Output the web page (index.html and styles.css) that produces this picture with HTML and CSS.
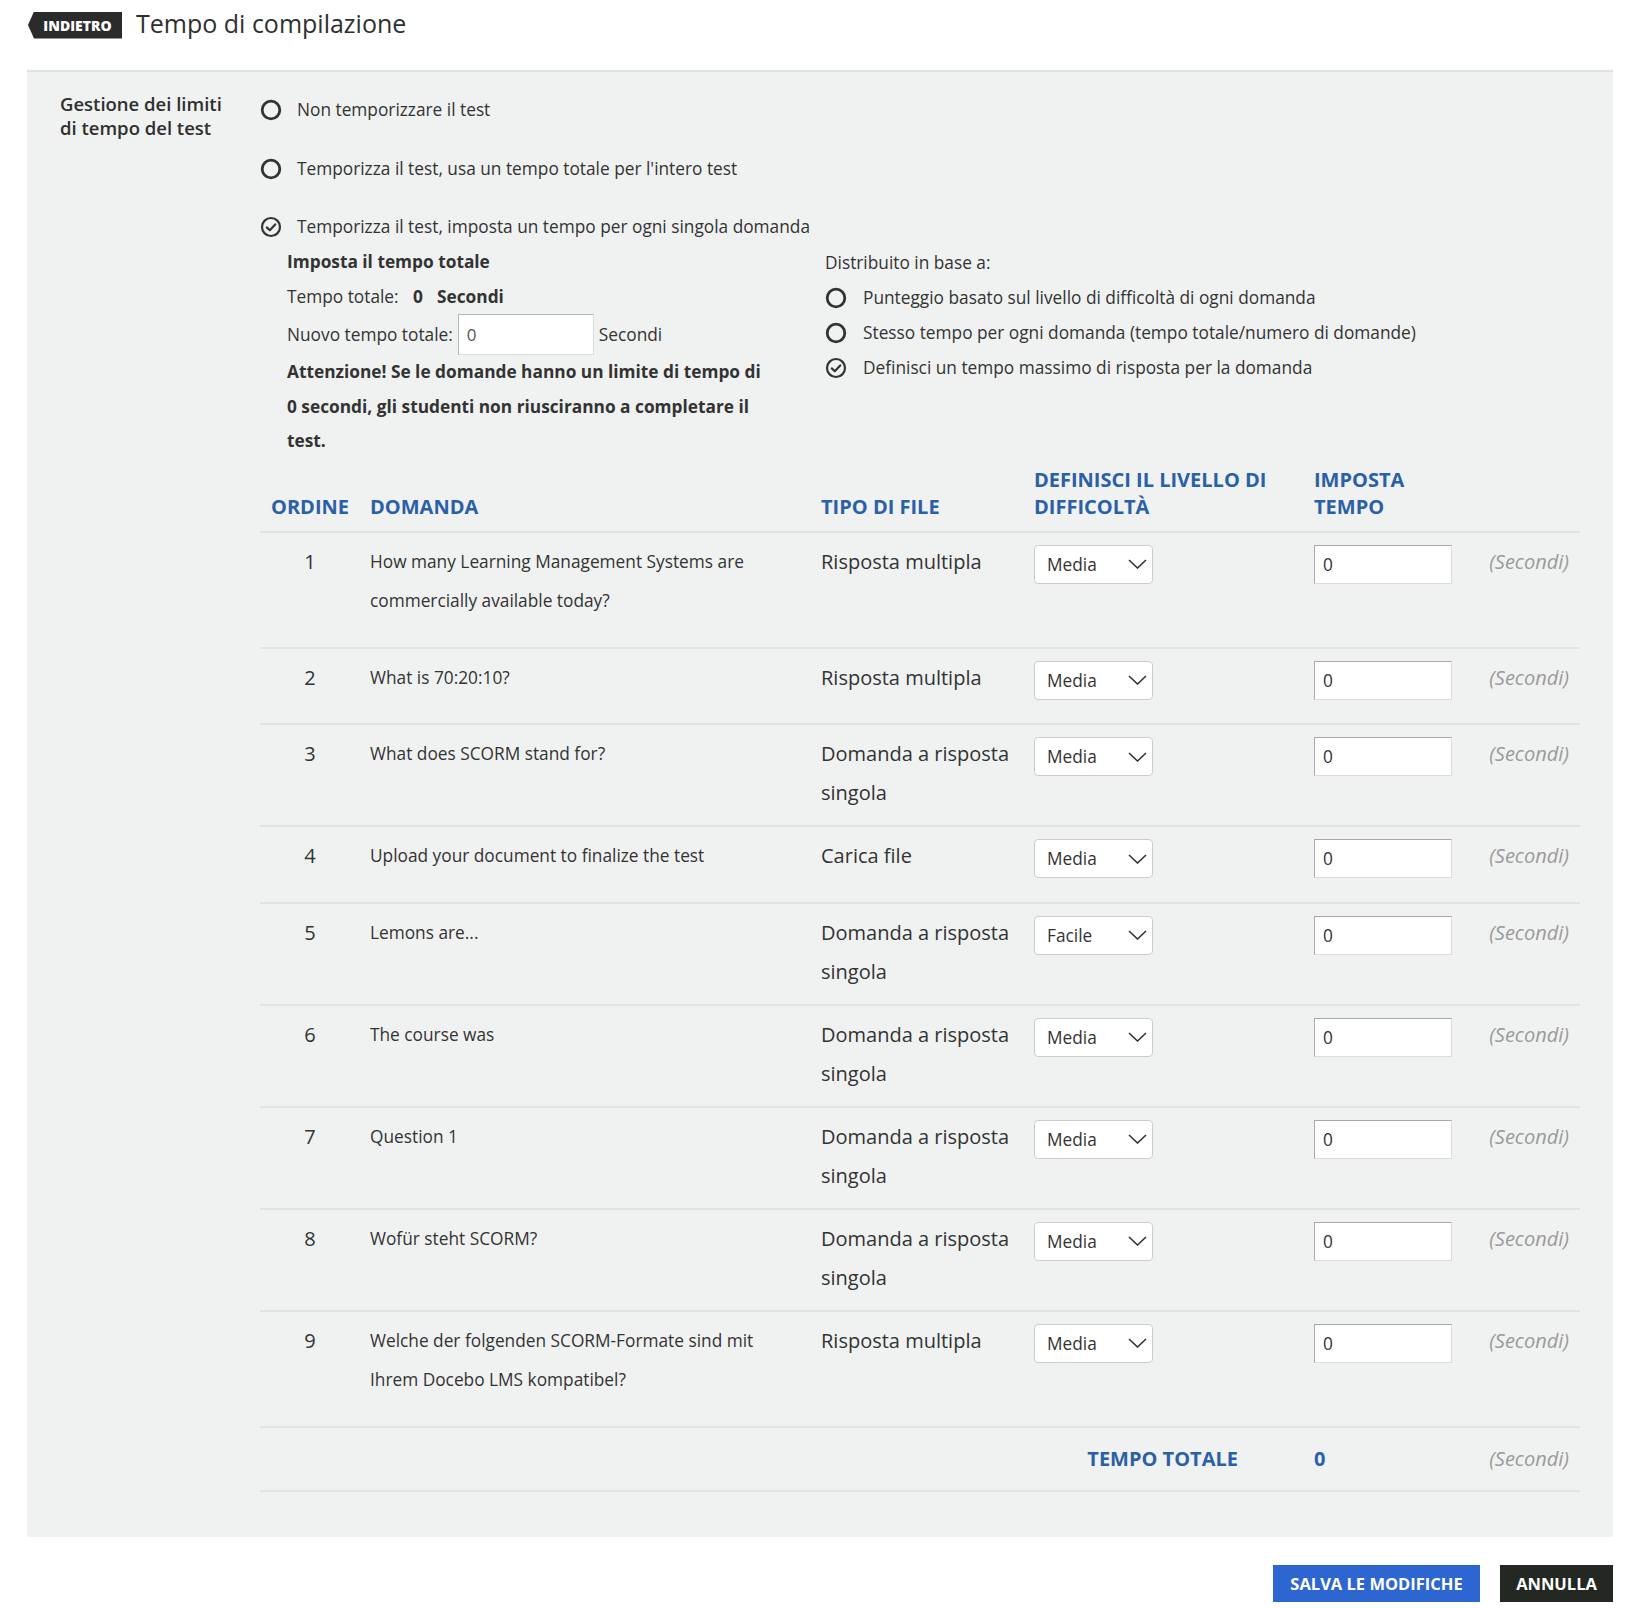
FILE: index.html
```html
<!DOCTYPE html>
<html lang="it">
<head>
<meta charset="utf-8">
<title>Tempo di compilazione</title>
<link rel="stylesheet" href="styles.css">
</head>
<body>
<header class="topbar">
  <a class="back-badge">INDIETRO</a>
  <h1 class="page-title">Tempo di compilazione</h1>
</header>

<section class="panel">
  <div class="panel-label">Gestione dei limiti di tempo del test</div>
  <div class="panel-body">
    <div class="radio-list">
      <div class="radio-row">
        <svg class="radio-icon" width="22" height="22" viewBox="0 0 22 22"><circle cx="11" cy="11" r="8.8" fill="none" stroke="#333" stroke-width="2.8"/></svg>
        <span>Non temporizzare il test</span>
      </div>
      <div class="radio-row">
        <svg class="radio-icon" width="22" height="22" viewBox="0 0 22 22"><circle cx="11" cy="11" r="8.8" fill="none" stroke="#333" stroke-width="2.8"/></svg>
        <span>Temporizza il test, usa un tempo totale per l'intero test</span>
      </div>
      <div class="radio-row">
        <svg class="radio-icon" width="22" height="22" viewBox="0 0 22 22"><circle cx="11" cy="11" r="9" fill="none" stroke="#333" stroke-width="2.2"/><path d="M6.8 11.4 L9.8 14.2 L15.2 8.4" fill="none" stroke="#333" stroke-width="2.2" stroke-linecap="round" stroke-linejoin="round"/></svg>
        <span>Temporizza il test, imposta un tempo per ogni singola domanda</span>
      </div>
    </div>

    <div class="sub-block">
      <div class="sub-left">
        <div class="sub-heading">Imposta il tempo totale</div>
        <div class="sub-line">Tempo totale: <b class="gap">0</b><b class="gap-wide">Secondi</b></div>
        <div class="sub-line input-line">Nuovo tempo totale: <input class="total-input" type="text" value="0"> Secondi</div>
        <p class="warning">Attenzione! Se le domande hanno un limite di tempo di 0 secondi, gli studenti non riusciranno a completare il test.</p>
      </div>
      <div class="sub-right">
        <div class="sub-line">Distribuito in base a:</div>
        <div class="dist-row">
          <svg class="radio-icon" width="22" height="22" viewBox="0 0 22 22"><circle cx="11" cy="11" r="8.8" fill="none" stroke="#333" stroke-width="2.8"/></svg>
          <span>Punteggio basato sul livello di difficoltà di ogni domanda</span>
        </div>
        <div class="dist-row">
          <svg class="radio-icon" width="22" height="22" viewBox="0 0 22 22"><circle cx="11" cy="11" r="8.8" fill="none" stroke="#333" stroke-width="2.8"/></svg>
          <span>Stesso tempo per ogni domanda (tempo totale/numero di domande)</span>
        </div>
        <div class="dist-row">
          <svg class="radio-icon" width="22" height="22" viewBox="0 0 22 22"><circle cx="11" cy="11" r="9" fill="none" stroke="#333" stroke-width="2.2"/><path d="M6.8 11.4 L9.8 14.2 L15.2 8.4" fill="none" stroke="#333" stroke-width="2.2" stroke-linecap="round" stroke-linejoin="round"/></svg>
          <span>Definisci un tempo massimo di risposta per la domanda</span>
        </div>
      </div>
    </div>

    <div class="qtable">
      <div class="trow thead">
        <div class="cell c-order">ORDINE</div>
        <div class="cell">DOMANDA</div>
        <div class="cell">TIPO DI FILE</div>
        <div class="cell">DEFINISCI IL LIVELLO DI<br>DIFFICOLTÀ</div>
        <div class="cell">IMPOSTA<br>TEMPO</div>
        <div class="cell"></div>
      </div>

      <div class="trow">
        <div class="cell c-order">1</div>
        <div class="cell"><p class="question">How many Learning Management Systems are commercially available today?</p></div>
        <div class="cell c-type">Risposta multipla</div>
        <div class="cell"><div class="select"><span>Media</span><svg width="19" height="10" viewBox="0 0 19 10"><path d="M1 1 L9.5 9 L18 1" fill="none" stroke="#333" stroke-width="1.6"/></svg></div></div>
        <div class="cell"><input class="time-input" type="text" value="0"></div>
        <div class="cell c-unit">(Secondi)</div>
      </div>

      <div class="trow">
        <div class="cell c-order">2</div>
        <div class="cell"><p class="question">What is 70:20:10?</p></div>
        <div class="cell c-type">Risposta multipla</div>
        <div class="cell"><div class="select"><span>Media</span><svg width="19" height="10" viewBox="0 0 19 10"><path d="M1 1 L9.5 9 L18 1" fill="none" stroke="#333" stroke-width="1.6"/></svg></div></div>
        <div class="cell"><input class="time-input" type="text" value="0"></div>
        <div class="cell c-unit">(Secondi)</div>
      </div>

      <div class="trow">
        <div class="cell c-order">3</div>
        <div class="cell"><p class="question">What does SCORM stand for?</p></div>
        <div class="cell c-type">Domanda a risposta singola</div>
        <div class="cell"><div class="select"><span>Media</span><svg width="19" height="10" viewBox="0 0 19 10"><path d="M1 1 L9.5 9 L18 1" fill="none" stroke="#333" stroke-width="1.6"/></svg></div></div>
        <div class="cell"><input class="time-input" type="text" value="0"></div>
        <div class="cell c-unit">(Secondi)</div>
      </div>

      <div class="trow">
        <div class="cell c-order">4</div>
        <div class="cell"><p class="question">Upload your document to finalize the test</p></div>
        <div class="cell c-type">Carica file</div>
        <div class="cell"><div class="select"><span>Media</span><svg width="19" height="10" viewBox="0 0 19 10"><path d="M1 1 L9.5 9 L18 1" fill="none" stroke="#333" stroke-width="1.6"/></svg></div></div>
        <div class="cell"><input class="time-input" type="text" value="0"></div>
        <div class="cell c-unit">(Secondi)</div>
      </div>

      <div class="trow">
        <div class="cell c-order">5</div>
        <div class="cell"><p class="question">Lemons are...</p></div>
        <div class="cell c-type">Domanda a risposta singola</div>
        <div class="cell"><div class="select"><span>Facile</span><svg width="19" height="10" viewBox="0 0 19 10"><path d="M1 1 L9.5 9 L18 1" fill="none" stroke="#333" stroke-width="1.6"/></svg></div></div>
        <div class="cell"><input class="time-input" type="text" value="0"></div>
        <div class="cell c-unit">(Secondi)</div>
      </div>

      <div class="trow">
        <div class="cell c-order">6</div>
        <div class="cell"><p class="question">The course was</p></div>
        <div class="cell c-type">Domanda a risposta singola</div>
        <div class="cell"><div class="select"><span>Media</span><svg width="19" height="10" viewBox="0 0 19 10"><path d="M1 1 L9.5 9 L18 1" fill="none" stroke="#333" stroke-width="1.6"/></svg></div></div>
        <div class="cell"><input class="time-input" type="text" value="0"></div>
        <div class="cell c-unit">(Secondi)</div>
      </div>

      <div class="trow">
        <div class="cell c-order">7</div>
        <div class="cell"><p class="question">Question 1</p></div>
        <div class="cell c-type">Domanda a risposta singola</div>
        <div class="cell"><div class="select"><span>Media</span><svg width="19" height="10" viewBox="0 0 19 10"><path d="M1 1 L9.5 9 L18 1" fill="none" stroke="#333" stroke-width="1.6"/></svg></div></div>
        <div class="cell"><input class="time-input" type="text" value="0"></div>
        <div class="cell c-unit">(Secondi)</div>
      </div>

      <div class="trow">
        <div class="cell c-order">8</div>
        <div class="cell"><p class="question">Wofür steht SCORM?</p></div>
        <div class="cell c-type">Domanda a risposta singola</div>
        <div class="cell"><div class="select"><span>Media</span><svg width="19" height="10" viewBox="0 0 19 10"><path d="M1 1 L9.5 9 L18 1" fill="none" stroke="#333" stroke-width="1.6"/></svg></div></div>
        <div class="cell"><input class="time-input" type="text" value="0"></div>
        <div class="cell c-unit">(Secondi)</div>
      </div>

      <div class="trow">
        <div class="cell c-order">9</div>
        <div class="cell"><p class="question">Welche der folgenden SCORM-Formate sind mit Ihrem Docebo LMS kompatibel?</p></div>
        <div class="cell c-type">Risposta multipla</div>
        <div class="cell"><div class="select"><span>Media</span><svg width="19" height="10" viewBox="0 0 19 10"><path d="M1 1 L9.5 9 L18 1" fill="none" stroke="#333" stroke-width="1.6"/></svg></div></div>
        <div class="cell"><input class="time-input" type="text" value="0"></div>
        <div class="cell c-unit">(Secondi)</div>
      </div>

      <div class="trow tfoot">
        <div class="cell c-total-label">TEMPO TOTALE</div>
        <div class="cell c-total-value">0</div>
        <div class="cell c-unit">(Secondi)</div>
      </div>
    </div>
  </div>
</section>

<footer class="actions">
  <button class="btn btn-primary">SALVA LE MODIFICHE</button>
  <button class="btn btn-dark">ANNULLA</button>
</footer>
</body>
</html>
```

FILE: styles.css
```css
* { box-sizing: border-box; }

body {
  margin: 0;
  background: #ffffff;
  color: #333333;
  font-family: "Open Sans", "Noto Sans", "Liberation Sans", sans-serif;
  font-size: 17.3px;
}

.topbar {
  display: flex;
  align-items: center;
  height: 50px;
  padding: 0 0 0 28px;
  margin-bottom: 20px;
}

.back-badge {
  display: flex;
  align-items: center;
  justify-content: center;
  width: 94px;
  height: 27px;
  padding-left: 5px;
  background: #2b2b2b;
  color: #ffffff;
  font-size: 14px;
  font-weight: 800;
  clip-path: polygon(6px 0, 100% 0, 100% 100%, 6px 100%, 0 50%);
}

.page-title {
  margin: 0 0 4px 14px;
  font-size: 25px;
  font-weight: 400;
  color: #2f2f2f;
}

.panel {
  display: flex;
  margin: 0 17px 0 27px;
  padding: 20px 33px 45px 0;
  background: #f0f2f1;
  border-top: 2px solid #e1e3e2;
}

.panel-label {
  width: 233px;
  flex: none;
  padding-left: 33px;
  padding-right: 28px;
  font-size: 18.5px;
  font-weight: 600;
  line-height: 24px;
  color: #2f2f2f;
}

.panel-body {
  flex: 1;
  min-width: 0;
}

.radio-list {
  display: flex;
  flex-direction: column;
  gap: 34.5px;
  padding-top: 6px;
}

.radio-row, .dist-row {
  display: flex;
  align-items: center;
  gap: 15px;
  line-height: 24px;
}

.radio-icon { flex: none; }

.sub-block {
  display: flex;
  margin-top: 6px;
  padding-left: 27px;
}

.sub-left {
  width: 538px;
  flex: none;
}

.sub-heading {
  font-weight: 700;
  line-height: 34px;
}

.sub-line {
  line-height: 35px;
}

.gap { margin-left: 10px; }
.gap-wide { margin-left: 14px; }

.input-line {
  display: flex;
  align-items: center;
  gap: 5px;
}

.total-input {
  width: 136px;
  height: 41px;
  padding: 0 8px;
  border: 1px solid #dcdcdc;
  border-top-color: #b5b5b5;
  border-left-color: #b5b5b5;
  background: #ffffff;
  font-family: inherit;
  font-size: 17px;
  color: #555555;
}

.warning {
  margin: 0;
  max-width: 478px;
  font-weight: 700;
  line-height: 34.5px;
}

.sub-right .dist-row {
  line-height: 35px;
  gap: 16px;
}

.qtable {
  margin-top: 2px;
  border-bottom: 2px solid #e1e3e2;
}

.trow {
  display: grid;
  grid-template-columns: 100px 451px 213px 280px 166px 110px;
  align-items: start;
  padding: 12px 0 13px;
  border-top: 2px solid #e1e3e2;
}

.thead {
  align-items: end;
  border-top: none;
  padding: 5px 0 11px;
  color: #2b60a7;
  font-size: 20px;
  font-weight: 700;
  line-height: 27px;
}

.cell {
  padding-left: 10px;
}

.c-order {
  padding-left: 0;
  margin-top: -3px;
  text-align: center;
  font-size: 20px;
  line-height: 39px;
}

.thead .c-order { margin-top: 0; line-height: 27px; }

.question {
  margin: -3px 0 13px;
  max-width: 420px;
  font-size: 17.3px;
  line-height: 39.5px;
}

.c-type {
  margin-top: -3px;
  font-size: 20px;
  line-height: 39px;
  padding-right: 8px;
}

.select {
  display: flex;
  align-items: center;
  justify-content: space-between;
  width: 119px;
  height: 39px;
  padding: 0 5px 0 12px;
  background: #ffffff;
  border: 1px solid #cccccc;
  border-radius: 4px;
  font-size: 17.3px;
}

.time-input {
  display: block;
  width: 138px;
  height: 39px;
  padding: 0 8px;
  border: 1px solid #dcdcdc;
  border-top-color: #a9a9a9;
  border-left-color: #a9a9a9;
  background: #ffffff;
  font-family: inherit;
  font-size: 17.3px;
  color: #333333;
}

.c-unit {
  margin-top: -3px;
  padding: 0 11px 0 0;
  text-align: right;
  font-size: 20px;
  font-style: italic;
  line-height: 39px;
  color: #9a9a9a;
}

.tfoot {
  grid-template-columns: 1044px 166px 110px;
  padding: 11px 0 12px;
}

.tfoot .c-unit { margin-top: 0; }

.c-total-label {
  text-align: right;
  padding-right: 66px;
  color: #2b60a7;
  font-size: 20px;
  font-weight: 700;
  line-height: 39px;
}

.c-total-value {
  color: #2b60a7;
  font-size: 20px;
  font-weight: 700;
  line-height: 39px;
}

.actions {
  display: flex;
  justify-content: flex-end;
  gap: 20px;
  margin: 28px 17px 0 0;
}

.btn {
  height: 37px;
  padding: 0 15px;
  border: none;
  color: #ffffff;
  font-family: inherit;
  font-size: 16.5px;
  font-weight: 700;
  white-space: nowrap;
}

.btn-primary {
  min-width: 207px;
  background: #2d66d1;
}

.btn-dark {
  min-width: 113px;
  background: #232823;
}
```
